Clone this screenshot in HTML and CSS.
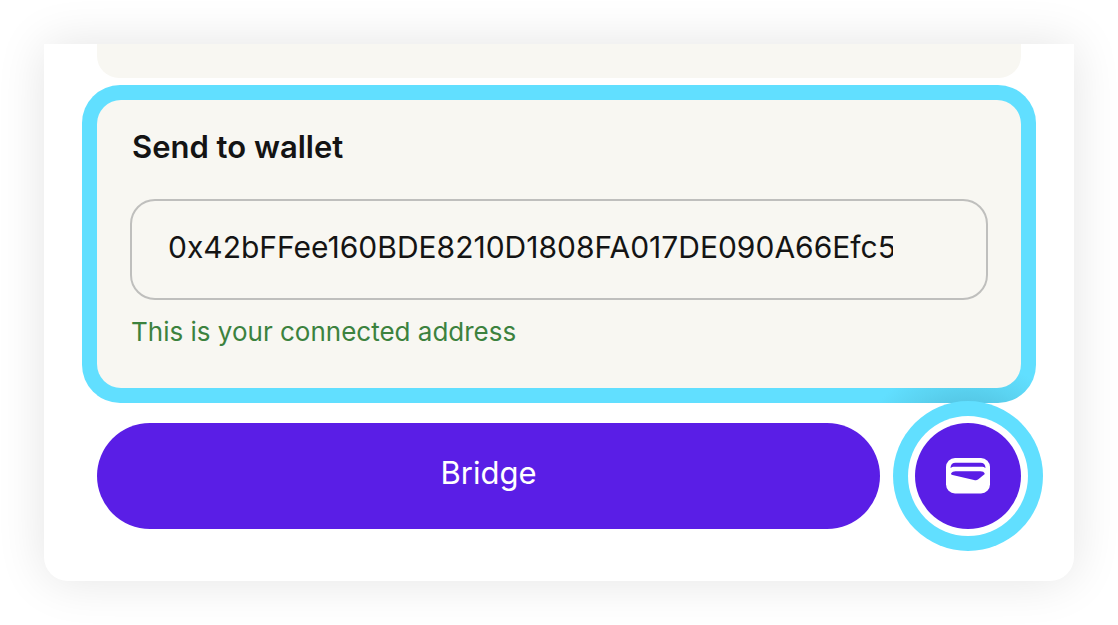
FILE: index.html
```html
<!DOCTYPE html>
<html lang="en">
<head>
<meta charset="utf-8">
<title>Bridge</title>
<link rel="stylesheet" href="styles.css">
</head>
<body>
<main class="widget">
  <div class="previous-panel"></div>
  <section class="highlight">
    <div class="wallet-panel">
      <label class="wallet-title" for="address">Send to wallet</label>
      <input class="address" id="address" type="text" value="0x42bFFee160BDE8210D1808FA017DE090A66Efc5" aria-describedby="address-note" spellcheck="false">
      <p class="note" id="address-note">This is your connected address</p>
    </div>
  </section>
  <div class="actions">
    <button class="bridge" type="button">Bridge</button>
    <button class="wallet-button" type="button" aria-label="Send to a different wallet">
      <svg class="wallet-icon" viewBox="0 0 44 36" aria-hidden="true">
        <rect width="44" height="35.500" rx="9" fill="#fff"/>
        <path d="M4.500 10C4.500 6.500 6.500 4.800 9.500 4.800H34.500C37.500 4.800 39.500 6.500 39.500 10C38.500 9.200 37 8.800 35.500 8.800H8.500C7 8.800 5.500 9.200 4.500 10Z" fill="#5a1ee6"/>
        <path d="M5 15.500C6 14 7.500 13.300 9.500 13.300H34.500C36.500 13.300 38.300 14 38.800 16L32 21.500C31 22.300 30 22.400 29 22.200L5.500 16.800Z" fill="#5a1ee6"/>
      </svg>
    </button>
  </div>
</main>
</body>
</html>
```
FILE: styles.css
```css
* {
  box-sizing: border-box;
}

body {
  margin: 0;
  padding: 44px;
  background: #fff;
  color: #141414;
  font-family: Inter, "Liberation Sans", sans-serif;
}

.widget {
  padding: 0 38px 52px;
  border-radius: 0 0 24px 24px;
  background: #fff;
  box-shadow: 0 0 50px rgba(0, 0, 0, 0.11);
}

.previous-panel {
  height: 34px;
  margin: 0 15px 7px;
  border-radius: 0 0 22px 22px;
  background: #f8f7f2;
}

.highlight {
  padding: 15px;
  border-radius: 38px;
  background: radial-gradient(circle at right 68px bottom -73px, #54c6e4 70px, #5bd3f1 90px, #61dfff 116px);
}

.wallet-panel {
  padding: 27px 33px 38px;
  border-radius: 24px;
  background: #f8f7f2;
}

.wallet-title {
  display: block;
  margin: 0 2px 32px;
  font-size: 31px;
  font-weight: 600;
  line-height: 40px;
}

.address {
  display: block;
  width: 100%;
  height: 101px;
  padding: 0 93px 6px 36px;
  border: 2px solid #bfbfbd;
  border-radius: 25px;
  background: transparent;
  color: inherit;
  font: 400 30px Inter, "Liberation Sans", sans-serif;
}

.note {
  margin: 14px 1px 0;
  color: #3c823e;
  font-size: 26px;
  line-height: 36px;
}

.actions {
  display: flex;
  gap: 35px;
  margin: 20px 15px 0;
}

.bridge,
.wallet-button {
  height: 106px;
  border: 0;
  background: #5a1ee6;
  color: #fff;
}

.bridge {
  flex: 1;
  padding: 0 0 8px;
  border-radius: 53px;
  font: 400 31px Inter, "Liberation Sans", sans-serif;
}

.wallet-button {
  display: grid;
  place-items: center;
  width: 106px;
  padding: 0;
  border-radius: 50%;
  box-shadow: 0 0 0 7px #fff, 0 0 0 22px #61dfff;
}

.wallet-icon {
  width: 44px;
  height: 36px;
}
```
